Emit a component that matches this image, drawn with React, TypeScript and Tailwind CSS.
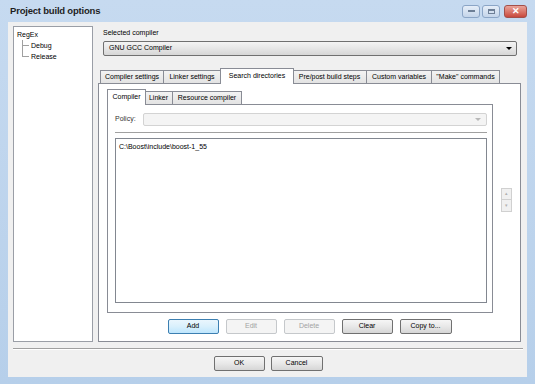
const font = "font-['Liberation_Sans',Arial,sans-serif]";

function Btn({ label, disabled, primary, w = 'w-[51px]' }: { label: string; disabled?: boolean; primary?: boolean; w?: string }) {
  let cls = 'border-[#707070] bg-gradient-to-b from-[#f6f6f6] via-[#e8e8e8] to-[#d6d6d6] text-black';
  if (primary) cls = 'border-[#3c7fb1] bg-gradient-to-b from-[#eaf6fd] via-[#d9f0fc] to-[#bee6fd] text-black';
  if (disabled) cls = 'border-[#c5c8cb] bg-[#f4f4f4] text-[#a3a3a3]';
  return (
    <div className={`${w} h-[15px] rounded-[2px] border flex items-center justify-center text-[7px] ${cls}`}>
      {label}
    </div>
  );
}

function Tab({ label, w, selected }: { label: string; w: string; selected?: boolean }) {
  if (selected) {
    return (
      <div className={`${w} h-[16px] -mb-px z-10 -mx-px bg-white border border-b-0 border-[#898c95] flex items-center justify-center text-[7px]`}>
        {label}
      </div>
    );
  }
  return (
    <div className={`${w} h-[13px] bg-gradient-to-b from-[#f3f3f3] to-[#e3e3e3] border border-[#898c95] border-b-0 -ml-px first:ml-0 flex items-center justify-center text-[7px]`}>
      {label}
    </div>
  );
}

function TreeChild({ label, last }: { label: string; last?: boolean }) {
  return (
    <div className="flex h-[11px]">
      <div className="w-[7px] flex flex-col">
        <div className="h-[6px] border-l border-b border-[#a0a0a0]" />
        <div className={`flex-1 ${last ? '' : 'border-l border-[#a0a0a0]'}`} />
      </div>
      <span className="ml-[2px] leading-[11px]">{label}</span>
    </div>
  );
}

export default function App() {
  return (
    <div className={`w-[535px] h-[384px] bg-gradient-to-b from-[#c6daf0] to-[#b6cfea] flex flex-col ${font} text-black`}>
      <div className="h-[22px] flex items-center justify-between pl-[10px] pr-[8px]">
        <span className="text-[9.5px] font-bold tracking-[-0.2px] text-[#1e1e1e]">Project build options</span>
        <div className="flex items-center">
          <div className="w-[18px] h-[13px] rounded-[3px] border border-[#8ba5c6] bg-gradient-to-b from-[#e6eef8] to-[#c4d5ea] flex items-center justify-center">
            <div className="w-[7px] h-[2px] bg-[#6d7f96]" />
          </div>
          <div className="ml-[2px] w-[18px] h-[13px] rounded-[3px] border border-[#8ba5c6] bg-gradient-to-b from-[#e6eef8] to-[#c4d5ea] flex items-center justify-center">
            <div className="w-[7px] h-[5px] border border-[#6d7f96] border-t-2" />
          </div>
          <div className="ml-[4px] w-[23px] h-[13px] rounded-[3px] border border-[#a3504a] bg-gradient-to-b from-[#e9a39a] to-[#c8483d] flex items-center justify-center text-white text-[9px] font-bold leading-none">
            ✕
          </div>
        </div>
      </div>

      <div className="mx-[8px] mb-[7px] flex-1 bg-[#f0f0f0] flex flex-col pl-[5px] pr-[4px] pt-[4px] text-[7px]">
        <div className="flex h-[316px]">
          <div className="w-[80px] bg-white border border-[#9a9ea6] pl-[3px] pt-[2px]">
            <div className="leading-[11px]">RegEx</div>
            <div className="ml-[5px]">
              <TreeChild label="Debug" />
              <TreeChild label="Release" last />
            </div>
          </div>

          <div className="ml-[5px] flex-1 flex flex-col">
            <div className="h-[15px] pl-[5px] pt-[2px] leading-[10px]">Selected compiler</div>
            <div className="ml-[5px] w-[414px] h-[15px] rounded-[2px] border border-[#707070] bg-gradient-to-b from-[#f4f4f4] via-[#e6e6e6] to-[#d6d6d6] flex items-center justify-between pl-[5px] pr-[4px]">
              <span>GNU GCC Compiler</span>
              <div className="w-0 h-0 border-l-[3px] border-r-[3px] border-t-[3px] border-l-transparent border-r-transparent border-t-black" />
            </div>

            <div className="mt-[12px] flex items-end h-[15px] pl-[2px]">
              <Tab label="Compiler settings" w="w-[64px]" />
              <Tab label="Linker settings" w="w-[58px]" />
              <Tab label="Search directories" w="w-[74px]" selected />
              <Tab label="Pre/post build steps" w="w-[75px]" />
              <Tab label="Custom variables" w="w-[66px]" />
              <Tab label={'"Make" commands'} w="w-[69px]" />
            </div>

            <div className="w-[423px] flex-1 bg-white border border-[#898c95] flex flex-col pt-[4px] pl-[8px]">
              <div className="flex items-end h-[16px] pl-[1px]">
                <Tab label="Compiler" w="w-[39px]" selected />
                <Tab label="Linker" w="w-[29px]" />
                <Tab label="Resource compiler" w="w-[70px]" />
              </div>
              <div className="flex items-start">
                <div className="w-[386px] h-[209px] border border-[#898c95] bg-white pl-[7px] pt-[8px]">
                  <div className="flex items-center h-[13px]">
                    <span className="w-[28px] text-[#333]">Policy:</span>
                    <div className="w-[344px] h-[13px] rounded-[2px] border border-[#d3d3d3] bg-[#f4f4f4] flex items-center justify-end pr-[5px]">
                      <div className="w-0 h-0 border-l-[3px] border-r-[3px] border-t-[3px] border-l-transparent border-r-transparent border-t-[#b8b8b8]" />
                    </div>
                  </div>
                  <div className="mt-[6px] w-[372px] border-t border-[#a0a0a0] border-b border-b-white" />
                  <div className="mt-[4px] w-[372px] h-[165px] border border-[#828790] bg-white pl-[3px] pt-[3px] leading-[10px]">
                    C:\Boost\include\boost-1_55
                  </div>
                </div>
                <div className="ml-[8px] mt-[84px] flex flex-col">
                  <div className="w-[11px] h-[12px] border border-[#d0d0d0] bg-[#f0f0f0] flex items-center justify-center text-[5px] text-[#b0b0b0]">▴</div>
                  <div className="w-[11px] h-[12px] border border-t-0 border-[#d0d0d0] bg-[#f0f0f0] flex items-center justify-center text-[5px] text-[#b0b0b0]">▾</div>
                </div>
              </div>
              <div className="mt-[6px] flex justify-center gap-[7px] -ml-[8px]">
                <Btn label="Add" primary />
                <Btn label="Edit" disabled />
                <Btn label="Delete" disabled />
                <Btn label="Clear" />
                <Btn label="Copy to..." w="w-[52px]" />
              </div>
            </div>
          </div>
        </div>

        <div className="mt-[6px] border-t border-[#a0a0a0] border-b border-b-white" />
        <div className="mt-[6px] flex justify-center gap-[6px]">
          <Btn label="OK" />
          <Btn label="Cancel" w="w-[52px]" />
        </div>
      </div>
    </div>
  );
}
